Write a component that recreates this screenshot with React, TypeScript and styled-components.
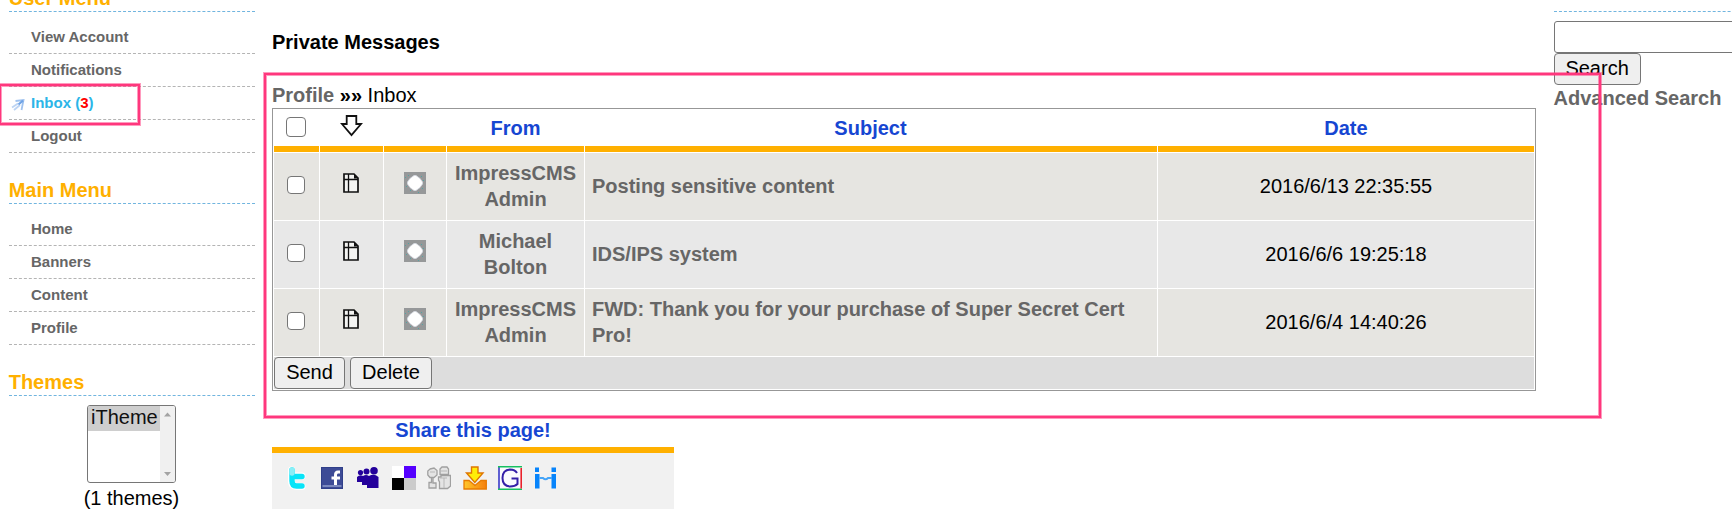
import React from "react";
import styled, { createGlobalStyle } from "styled-components";

const GlobalStyle = createGlobalStyle`
  *, *::before, *::after { box-sizing: border-box; }
  html, body { margin: 0; padding: 0; background: #fff; overflow: hidden; }
  body { font-family: "Liberation Sans", Arial, sans-serif; font-size: 20px; line-height: 26px; color: #000; }
`;

const Page = styled.div`
  position: relative;
  width: 1732px;
  height: 530px;
  overflow: hidden;
  display: flex;
  align-items: flex-start;
  padding-left: 8.7px;
`;

const Sidebar = styled.aside`
  flex: 0 0 246px;
  width: 246px;
  margin-top: -18px;
`;

const BlockTitle = styled.h2`
  margin: 0;
  height: 30px;
  font-size: 20px;
  line-height: 32px;
  color: #ffb000;
  border-bottom: 1px dashed #71b5df;
`;

const Menu = styled.ul`
  list-style: none;
  margin: 0 0 21px;
  padding: 9px 0 0;
`;

const MenuItem = styled.li<{ $active?: boolean }>`
  display: flex;
  align-items: center;
  height: 33px;
  padding-left: 2.3px;
  font-size: 15px;
  line-height: 18px;
  font-weight: bold;
  color: ${(p) => (p.$active ? "#2bb5e8" : "#666")};
  border-bottom: 1px dashed #b4b4b4;
`;

const Marker = styled.span`
  flex: 0 0 20px;
  display: flex;
  padding-top: 4px;
`;

const Count = styled.span`
  color: #f00;
`;

const ThemePicker = styled.div`
  display: flex;
  flex-direction: column;
  align-items: center;
  padding-top: 9px;
  padding-right: 0.4px;
`;

const ListBox = styled.div`
  width: 89px;
  height: 78px;
  display: flex;
  border: 1px solid #767676;
  border-radius: 3px;
  overflow: hidden;
`;

const Options = styled.div`
  flex: 1;
`;

const Option = styled.div`
  height: 25px;
  line-height: 23px;
  padding-left: 3px;
  background: #cecece;
  color: #101010;
`;

const ScrollBar = styled.div`
  width: 15px;
  background: #f0f0f0;
  display: flex;
`;

const ThemeCount = styled.div`
  margin-top: 2px;
`;

const Main = styled.main`
  flex: 0 0 1264px;
  margin-left: 17.3px;
  padding-top: 29px;
`;

const PageTitle = styled.h4`
  margin: 0 0 27px;
  font-size: 20px;
  line-height: 26px;
`;

const Crumbs = styled.div`
  height: 26px;
  white-space: pre;
`;

const Muted = styled.b`
  color: #666;
`;

const Table = styled.div`
  display: grid;
  grid-template-columns: 45px 63px 62px 137px 572px 376px;
  grid-template-rows: 42px 67px 67px 67px 32px;
  gap: 1px;
  padding: 1px;
  border: 1px solid #979797;
`;

const HeadCell = styled.div<{ $inset?: number }>`
  display: flex;
  align-items: center;
  justify-content: center;
  padding-right: ${(p) => p.$inset ?? 0}px;
  font-weight: bold;
  color: #1646d2;
  border-bottom: 6px solid #ffb000;
`;

const Cell = styled.div<{ $odd?: boolean; $left?: boolean }>`
  display: flex;
  align-items: center;
  justify-content: ${(p) => (p.$left ? "flex-start" : "center")};
  text-align: ${(p) => (p.$left ? "left" : "center")};
  padding: 0 7px 1px;
  background: ${(p) => (p.$odd ? "#e6e5e1" : "#e8e8e8")};
`;

const CheckBox = styled.span<{ $size: number }>`
  width: ${(p) => p.$size}px;
  height: ${(p) => p.$size}px;
  margin-right: 0.4px;
  margin-bottom: 2px;
  border: 1px solid #767676;
  border-radius: 4px;
  background: #fff;
`;

const Lift = styled.span<{ $by: number; $nudge?: number }>`
  display: flex;
  padding-bottom: ${(p) => p.$by}px;
  padding-right: ${(p) => p.$nudge ?? 0}px;
`;

const Foot = styled.div`
  grid-column: 1 / -1;
  display: flex;
  gap: 5px;
  background: #ddd;
`;

const Button = styled.button<{ $width: number }>`
  width: ${(p) => p.$width}px;
  height: 32px;
  margin: 0;
  padding: 0 0 2px;
  border: 1px solid #767676;
  border-radius: 4px;
  background: #efefef;
  color: #000;
  font: 20px/28px "Liberation Sans", Arial, sans-serif;
`;

const Share = styled.section`
  width: 402px;
  margin-top: 26px;
`;

const ShareTitle = styled.div`
  height: 36px;
  line-height: 26px;
  font-weight: bold;
  text-align: center;
  color: #1646d2;
  border-bottom: 6px solid #ffb000;
`;

const ShareIcons = styled.div`
  display: flex;
  gap: 11.33px;
  height: 56px;
  padding: 13px 14px;
  background: #f1f1f1;
`;

const SearchColumn = styled.aside`
  flex: 0 0 246px;
  margin-left: 17.6px;
  padding-top: 11px;
`;

const SearchRule = styled.div`
  height: 10px;
  border-top: 1px dashed #71b5df;
`;

const SearchForm = styled.form`
  display: flex;
  flex-direction: column;
  align-items: flex-start;
`;

const SearchInput = styled.input`
  width: 246px;
  height: 32px;
  border: 1px solid #767676;
  border-radius: 3px;
  background: #fff;
`;

const Highlight = styled.div<{ $x: number; $y: number; $w: number; $h: number }>`
  position: absolute;
  left: ${(p) => p.$x}px;
  top: ${(p) => p.$y}px;
  width: ${(p) => p.$w}px;
  height: ${(p) => p.$h}px;
  border: 2px solid #ff377d;
  box-shadow: 0 0 0 1px rgba(255, 55, 125, 0.5), inset 0 0 0 1px rgba(255, 55, 125, 0.5);
  pointer-events: none;
`;

const ActiveArrow = () => (
  <svg width="14" height="14" viewBox="0 0 14 14">
    <path d="M1 9.5 L7 5.5 M3 12 L9 7" stroke="#bdd4f3" strokeWidth="1.8" fill="none" />
    <path d="M4.5 3 L12.5 2 L10.5 12" stroke="#9fc2ef" strokeWidth="1.8" fill="none" />
    <path d="M7.5 6.5 L12 2.5" stroke="#6fa3e6" strokeWidth="2.2" fill="none" />
  </svg>
);

const DownArrow = () => (
  <svg width="23" height="22" viewBox="0 0 23 22">
    <path d="M6.7 1 H16.3 V9 H21 L11.5 20 L2 9 H6.7 Z" fill="#fff" stroke="#111" strokeWidth="1.8" />
  </svg>
);

const DocIcon = () => (
  <svg width="16" height="20" viewBox="0 0 16 20">
    <path d="M1 1 H11 L15 5 V19 H1 Z" fill="#f4f4f2" stroke="#111" strokeWidth="1.7" />
    <path d="M5.5 1 V19 M1 6.5 H15" stroke="#111" strokeWidth="1.3" fill="none" />
    <path d="M11 1 V5.5 H15 Z" fill="#111" />
  </svg>
);

const StatusIcon = () => (
  <svg width="22" height="22" viewBox="0 0 22 22">
    <rect width="22" height="22" fill="#969899" />
    <path d="M10 3.5 H12 L14 5 L16 6.5 L18.5 10 V12 L16 15.5 L14 17 L12 18.5 H10 L8 17 L6 15.5 L3.5 12 V10 L6 6.5 L8 5 Z" fill="#fff" stroke="#d5d9e2" strokeWidth="0.8" />
    <path d="M4 3h1v1h-1z M17 4h1v1h-1z M19 8h1v1h-1z M2 14h1v1h-1z M18 16h1v1h-1z M6 18h1v1h-1z M14 20h1v1h-1z M1 5h1v1h-1z" fill="#55a3a4" />
  </svg>
);

const Twitter = () => (
  <svg width="24" height="24" viewBox="0 0 24 24">
    <path d="M5.5 4 V16 Q6 20 11 20.5 H16 M6 10 H16" fill="none" stroke="#fff" strokeWidth="7" strokeLinejoin="round" strokeLinecap="round" />
    <path d="M6 4 V15 Q6 20 10.5 20 H16 M6 10.5 H16" fill="none" stroke="#08e4f8" strokeWidth="5.4" strokeLinejoin="round" strokeLinecap="round" />
    <path d="M6 4 V7" stroke="#8aeef6" strokeWidth="5.4" strokeLinecap="round" />
  </svg>
);

const Facebook = () => (
  <svg width="24" height="24" viewBox="0 0 24 24">
    <rect x="0.5" y="1.5" width="21" height="21" fill="#3d4b96" stroke="#303f89" />
    <rect x="1.5" y="19" width="19" height="2" fill="#7b88be" />
    <path d="M19 6 H17 Q14.5 6 14.5 9 V19 M10.5 12 H19" fill="none" stroke="#fff" strokeWidth="3" />
  </svg>
);

const MySpace = () => (
  <svg width="24" height="24" viewBox="0 0 24 24">
    <g fill="#24009b">
      <circle cx="3.5" cy="6.5" r="2.6" />
      <circle cx="9.5" cy="5.5" r="3" />
      <circle cx="17" cy="4.8" r="3.8" />
      <path d="M0 11 Q3 8 6 10 Q9 8 12 10 Q17 7 21.5 11 V22 H10 V19 H5 V16 H0 Z" />
    </g>
  </svg>
);

const Delicious = () => (
  <svg width="24" height="24" viewBox="0 0 24 24">
    <rect width="12" height="12" fill="#fff" />
    <rect x="12" width="12" height="12" fill="#5500ff" />
    <rect y="12" width="12" height="12" fill="#000" />
    <rect x="12" y="12" width="12" height="12" fill="#cbcbcb" />
  </svg>
);

const Digg = () => (
  <svg width="24" height="24" viewBox="0 0 24 24">
    <g fill="#e4e4e4" stroke="#a0a0a0" strokeWidth="1.3">
      <path d="M3 3 L7 2 L10 4.5 V9 L7 11.5 H3 L0.8 9 V5 Z" />
      <path d="M13 3 L15 1 H20 L21.5 3 V8.5 H13 Z" />
      <path d="M4.5 12 V16.5 H2 V22 H9 V17 H6 V12" />
      <path d="M11.5 11 H14 V9.5 H23.5 V20 L20.5 22.5 H12.5 V16 L11.5 14 Z" />
    </g>
    <path d="M17 12 V22 M13 12 H20 M14 5 H20 M3 6 H8" stroke="#b8b8b8" strokeWidth="1" />
  </svg>
);

const Download = () => (
  <svg width="24" height="24" viewBox="0 0 24 24">
    <defs>
      <linearGradient id="tray" x1="0" y1="0" x2="1" y2="0">
        <stop offset="0" stopColor="#ffc62b" />
        <stop offset="1" stopColor="#f57f0b" />
      </linearGradient>
    </defs>
    <path d="M1 14.5 H6 L12 19.5 L18 14.5 H23.3 V23 H1 Z" fill="url(#tray)" stroke="#e87b00" strokeWidth="1.3" />
    <path d="M8.5 1 H15 V7 H20 L11.8 16.5 L3.5 7 H8.5 Z" fill="#ffed08" stroke="#df7500" strokeWidth="1.4" />
  </svg>
);

const Google = () => (
  <svg width="24" height="24" viewBox="0 0 24 24">
    <rect x="0.5" y="0.5" width="23" height="23" fill="#fafafe" />
    <path d="M1 23 V1" stroke="#2b2cc4" strokeWidth="1.5" />
    <path d="M0 0.8 H24 M0 23.2 H24" stroke="#16c060" strokeWidth="1.6" />
    <path d="M23.2 2 V22.5" stroke="#e9222b" strokeWidth="1.6" />
    <path d="M19 7 Q17 3.5 12 3.5 Q4.5 4 4.5 12 Q4.5 20 12 20.5 Q17 20.5 19.5 18 V12.5 H13.5" fill="none" stroke="#3420a8" strokeWidth="2" />
  </svg>
);

const Mixx = () => (
  <svg width="24" height="24" viewBox="0 0 24 24">
    <g fill="#0784fb">
      <rect x="2" y="1.5" width="4" height="4.5" />
      <rect x="18.5" y="1.5" width="4.5" height="4.5" />
      <rect x="2" y="8" width="4.5" height="14.5" />
      <rect x="18.5" y="8" width="4.5" height="14.5" />
    </g>
    <path d="M6.5 12 H10 Q12.5 14.5 15 12 H19" fill="none" stroke="#45a4f7" strokeWidth="2" />
  </svg>
);

const ScrollArrows = () => (
  <svg width="15" height="76" viewBox="0 0 15 76">
    <path d="M4 10.5 L7.5 6.5 L11 10.5 Z M4 66 L7.5 70 L11 66 Z" fill="#a3a3a3" />
  </svg>
);

const userMenu = ["View Account", "Notifications", "Inbox", "Logout"];
const mainMenu = ["Home", "Banners", "Content", "Profile"];
const messages = [
  { from: "ImpressCMS Admin", subject: "Posting sensitive content", date: "2016/6/13 22:35:55" },
  { from: "Michael Bolton", subject: "IDS/IPS system", date: "2016/6/6 19:25:18" },
  { from: "ImpressCMS Admin", subject: "FWD: Thank you for your purchase of Super Secret Cert Pro!", date: "2016/6/4 14:40:26" },
];

export default function App() {
  return (
    <>
      <GlobalStyle />
      <Page>
        <Sidebar>
          <BlockTitle>User Menu</BlockTitle>
          <Menu>
            {userMenu.map((label) => (
              <MenuItem key={label} $active={label === "Inbox"}>
                <Marker>{label === "Inbox" && <ActiveArrow />}</Marker>
                {label === "Inbox" ? <span>Inbox (<Count>3</Count>)</span> : label}
              </MenuItem>
            ))}
          </Menu>
          <BlockTitle>Main Menu</BlockTitle>
          <Menu>
            {mainMenu.map((label) => (
              <MenuItem key={label}>
                <Marker />
                {label}
              </MenuItem>
            ))}
          </Menu>
          <BlockTitle>Themes</BlockTitle>
          <ThemePicker>
            <ListBox>
              <Options><Option>iTheme</Option></Options>
              <ScrollBar><ScrollArrows /></ScrollBar>
            </ListBox>
            <ThemeCount>(1 themes)</ThemeCount>
          </ThemePicker>
        </Sidebar>

        <Main>
          <PageTitle>Private Messages</PageTitle>
          <Crumbs><Muted>Profile</Muted> <b>»»</b> Inbox</Crumbs>
          <Table>
            <HeadCell><CheckBox $size={20} /></HeadCell>
            <HeadCell><Lift $by={4}><DownArrow /></Lift></HeadCell>
            <HeadCell />
            <HeadCell>From</HeadCell>
            <HeadCell $inset={1}>Subject</HeadCell>
            <HeadCell>Date</HeadCell>
            {messages.map((m, i) => {
              const odd = i % 2 === 0;
              return (
                <React.Fragment key={m.date}>
                  <Cell $odd={odd}><CheckBox $size={18} /></Cell>
                  <Cell $odd={odd}><Lift $by={7} $nudge={1}><DocIcon /></Lift></Cell>
                  <Cell $odd={odd}><Lift $by={6}><StatusIcon /></Lift></Cell>
                  <Cell $odd={odd}><Muted>{m.from}</Muted></Cell>
                  <Cell $odd={odd} $left><Muted>{m.subject}</Muted></Cell>
                  <Cell $odd={odd}>{m.date}</Cell>
                </React.Fragment>
              );
            })}
            <Foot>
              <Button $width={71}>Send</Button>
              <Button $width={82}>Delete</Button>
            </Foot>
          </Table>
          <Share>
            <ShareTitle>Share this page!</ShareTitle>
            <ShareIcons>
              <Twitter />
              <Facebook />
              <MySpace />
              <Delicious />
              <Digg />
              <Download />
              <Google />
              <Mixx />
            </ShareIcons>
          </Share>
        </Main>

        <SearchColumn>
          <SearchRule />
          <SearchForm onSubmit={(e) => e.preventDefault()}>
            <SearchInput aria-label="Search" />
            <Button $width={87}>Search</Button>
            <Muted>Advanced Search</Muted>
          </SearchForm>
        </SearchColumn>

        <Highlight $x={-1} $y={84} $w={141} $h={41} />
        <Highlight $x={264} $y={73} $w={1337} $h={345} />
      </Page>
    </>
  );
}
